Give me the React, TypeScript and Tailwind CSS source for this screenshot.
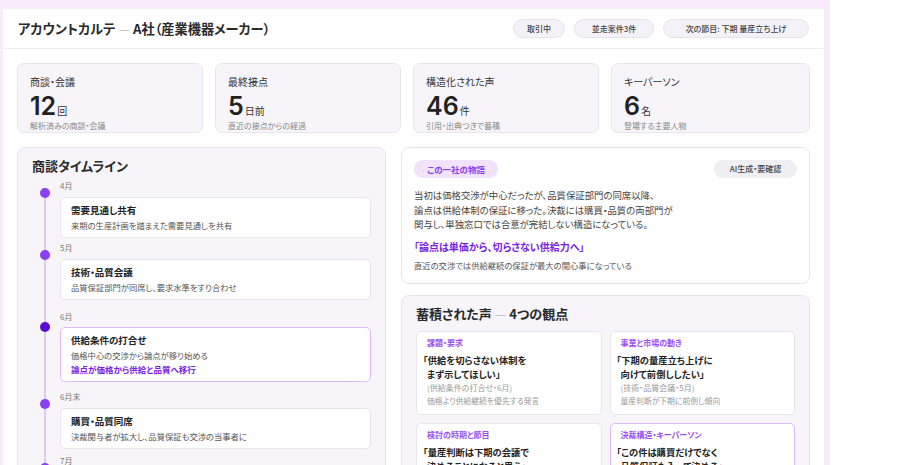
const badges = [
  { label: "取引中", w: "w-[52px]" },
  { label: "並走案件3件", w: "w-[80px]" },
  { label: "次の節目: 下期 量産立ち上げ", w: "w-[146px]" },
];

const stats = [
  { label: "商談・会議", value: "12", unit: "回", note: "解析済みの商談・会議" },
  { label: "最終接点", value: "5", unit: "日前", note: "直近の接点からの経過" },
  { label: "構造化された声", value: "46", unit: "件", note: "引用・出典つきで蓄積" },
  { label: "キーパーソン", value: "6", unit: "名", note: "登場する主要人物" },
];

type Meeting = {
  month: string;
  title: string;
  desc: string;
  shift?: string;
  mt: string;
};

const meetings: Meeting[] = [
  { month: "4月", title: "需要見通し共有", desc: "来期の生産計画を踏まえた需要見通しを共有", mt: "mt-0" },
  { month: "5月", title: "技術・品質会議", desc: "品質保証部門が同席し、要求水準をすり合わせ", mt: "mt-[4px]" },
  {
    month: "6月",
    title: "供給条件の打合せ",
    desc: "価格中心の交渉から論点が移り始める",
    shift: "論点が価格から供給と品質へ移行",
    mt: "mt-[11px]",
  },
  { month: "6月末", title: "購買・品質同席", desc: "決裁関与者が拡大し、品質保証も交渉の当事者に", mt: "mt-[9px]" },
  { month: "7月", title: "供給体制レビュー", desc: "複数拠点での供給継続計画を提示", mt: "mt-[6px]" },
];

const voices = [
  {
    tag: "課題・要求",
    quote: ["「供給を切らさない体制を", "まず示してほしい」"],
    source: "(供給条件の打合せ・6月)",
    note: "価格より供給継続を優先する発言",
  },
  {
    tag: "事業と市場の動き",
    quote: ["「下期の量産立ち上げに", "向けて前倒ししたい」"],
    source: "(技術・品質会議・5月)",
    note: "量産判断が下期に前倒し傾向",
  },
  {
    tag: "検討の時期と節目",
    quote: ["「量産判断は下期の会議で", "決めることになると思う」"],
    source: "(需要見通し共有・4月)",
    note: "判断時期は下期の会議",
  },
  {
    tag: "決裁構造・キーパーソン",
    quote: ["「この件は購買だけでなく", "品質保証も入って決める」"],
    source: "(購買・品質同席・6月末)",
    note: "決裁に複数部門が関与",
    active: true,
  },
];

const StatCard = ({ s }: { s: (typeof stats)[number] }) => (
  <div className="h-[70px] rounded-[7px] border border-[#e8e5ee] bg-[#f7f5fa] px-[12px] pt-[10px]">
    <div className="text-[10px] leading-[16px] text-[#333]">{s.label}</div>
    <div className="mt-[4px] flex h-[26px] items-baseline leading-none">
      <span className="font-['Inter',sans-serif] text-[25px] font-semibold text-[#222]">{s.value}</span>
      <span className="ml-[1px] text-[10px] text-[#333]">{s.unit}</span>
    </div>
    <div className="text-[8px] leading-[11px] text-[#888]">{s.note}</div>
  </div>
);

export default function App() {
  return (
    <div className="h-[465px] w-[900px] overflow-hidden bg-white font-['Noto_Sans_CJK_JP','Noto_Sans',sans-serif] [font-feature-settings:'palt']">
      <div className="h-full w-[830px] bg-[#f8ecfb] pl-[3px] pr-[6px] pt-[9px]">
        <div className="h-full bg-white">
          {/* header */}
          <div className="flex h-[40px] items-center justify-between border-b border-[#f0eef3] px-[15px]">
            <h1 className="text-[13.2px] font-bold text-[#2a2a2a]">
              アカウントカルテ <span className="font-normal text-[#bbb]">—</span> A社（産業機器メーカー）
            </h1>
            <div className="flex gap-[9px]">
              {badges.map((b) => (
                <span
                  key={b.label}
                  className={`${b.w} flex h-[19px] items-center justify-center rounded-full border border-[#e6e3ec] bg-[#f4f2f8] text-[8px] font-medium text-[#444]`}
                >
                  {b.label}
                </span>
              ))}
            </div>
          </div>

          <div className="px-[14px] pt-[14px]">
            <div className="grid grid-cols-[186px_186px_186px_1fr] gap-[12px]">
              {stats.map((s) => (
                <StatCard key={s.label} s={s} />
              ))}
            </div>

            <div className="mt-[14px] grid grid-cols-[369px_1fr] gap-[15px]">
              {/* timeline */}
              <div className="h-[400px] rounded-[8px] border border-[#e8e5ee] bg-[#f7f5fa] px-[14px] pt-[9px]">
                <h2 className="text-[13px] font-bold leading-[18px] text-[#2a2a2a]">商談タイムライン</h2>
                <div className="relative mt-[5px] pl-[28px]">
                  <div className="absolute bottom-0 left-[12px] top-[13px] w-[2px] bg-[#dccaf4]" />
                  {meetings.map((m) => (
                    <div key={m.month} className={`relative ${m.mt}`}>
                      <span
                        className={`absolute left-[-20px] h-[10px] w-[10px] rounded-full ${
                          m.shift ? "top-[11px] bg-[#5b0bd6]" : "top-[8px] bg-[#8b3ff6]"
                        }`}
                      />
                      <div className="text-[8px] leading-[12px] text-[#777]">{m.month}</div>
                      <div
                        className={`${m.shift ? "mt-[4px] border-[#e2b9f7]" : "mt-[5px] border-[#e8e5ee]"} rounded-[5px] border bg-white px-[10px] pb-[5px] pt-[4px]`}
                      >
                        <div className="text-[9.5px] font-bold leading-[16px] text-[#222]">{m.title}</div>
                        <div className="text-[8.3px] leading-[14px] text-[#555]">{m.desc}</div>
                        {m.shift && (
                          <div className="text-[8.5px] font-bold leading-[14px] text-[#7b1fe6]">{m.shift}</div>
                        )}
                      </div>
                    </div>
                  ))}
                </div>
              </div>

              {/* right column */}
              <div className="flex flex-col gap-[11px]">
                <div className="h-[137px] rounded-[8px] border border-[#e8e5ee] bg-white px-[12px] pt-[12px]">
                  <div className="flex items-center justify-between">
                    <span className="flex h-[18px] w-[84px] items-center justify-center rounded-full bg-[#f1e2fd] text-[8.5px] font-semibold text-[#8a3ff2]">
                      この一社の物語
                    </span>
                    <span className="flex h-[18px] w-[83px] items-center justify-center rounded-full bg-[#efeef2] text-[8px] font-medium text-[#444]">
                      AI生成・要確認
                    </span>
                  </div>
                  <p className="mt-[10px] text-[9.4px] leading-[14.5px] text-[#444]">
                    当初は価格交渉が中心だったが、品質保証部門の同席以降、
                    <br />
                    論点は供給体制の保証に移った。決裁には購買・品質の両部門が
                    <br />
                    関与し、単独窓口では合意が完結しない構造になっている。
                  </p>
                  <div className="mt-[7px] text-[10px] font-bold leading-[15px] text-[#7b1fe6]">
                    「論点は単価から、切らさない供給力へ」
                  </div>
                  <div className="mt-[5px] text-[8.3px] leading-[12px] text-[#555]">
                    直近の交渉では供給継続の保証が最大の関心事になっている
                  </div>
                </div>

                <div className="h-[200px] rounded-[8px] border border-[#e8e5ee] bg-[#f7f5fa] px-[14px] pt-[9px]">
                  <h2 className="text-[13px] font-bold leading-[18px] text-[#2a2a2a]">
                    蓄積された声 <span className="font-normal text-[#bbb]">—</span> 4つの観点
                  </h2>
                  <div className="mt-[8px] grid grid-cols-2 gap-[8px]">
                    {voices.map((v) => (
                      <div
                        key={v.tag}
                        className={`rounded-[5px] border bg-white px-[10px] pb-[7px] pt-[5px] ${
                          v.active ? "border-[#e2b9f7]" : "border-[#e8e5ee]"
                        }`}
                      >
                        <div className="text-[8px] font-semibold leading-[12px] text-[#9b4ff5]">{v.tag}</div>
                        <div className="mt-[4px] text-[9.3px] font-semibold leading-[14px] text-[#222]">
                          <div className="-ml-[4px]">{v.quote[0]}</div>
                          <div>{v.quote[1]}</div>
                        </div>
                        <div className="text-[8px] leading-[13px] text-[#999]">{v.source}</div>
                        <div className="text-[7.8px] leading-[13px] text-[#999]">{v.note}</div>
                      </div>
                    ))}
                  </div>
                </div>
              </div>
            </div>
          </div>
        </div>
      </div>
    </div>
  );
}
